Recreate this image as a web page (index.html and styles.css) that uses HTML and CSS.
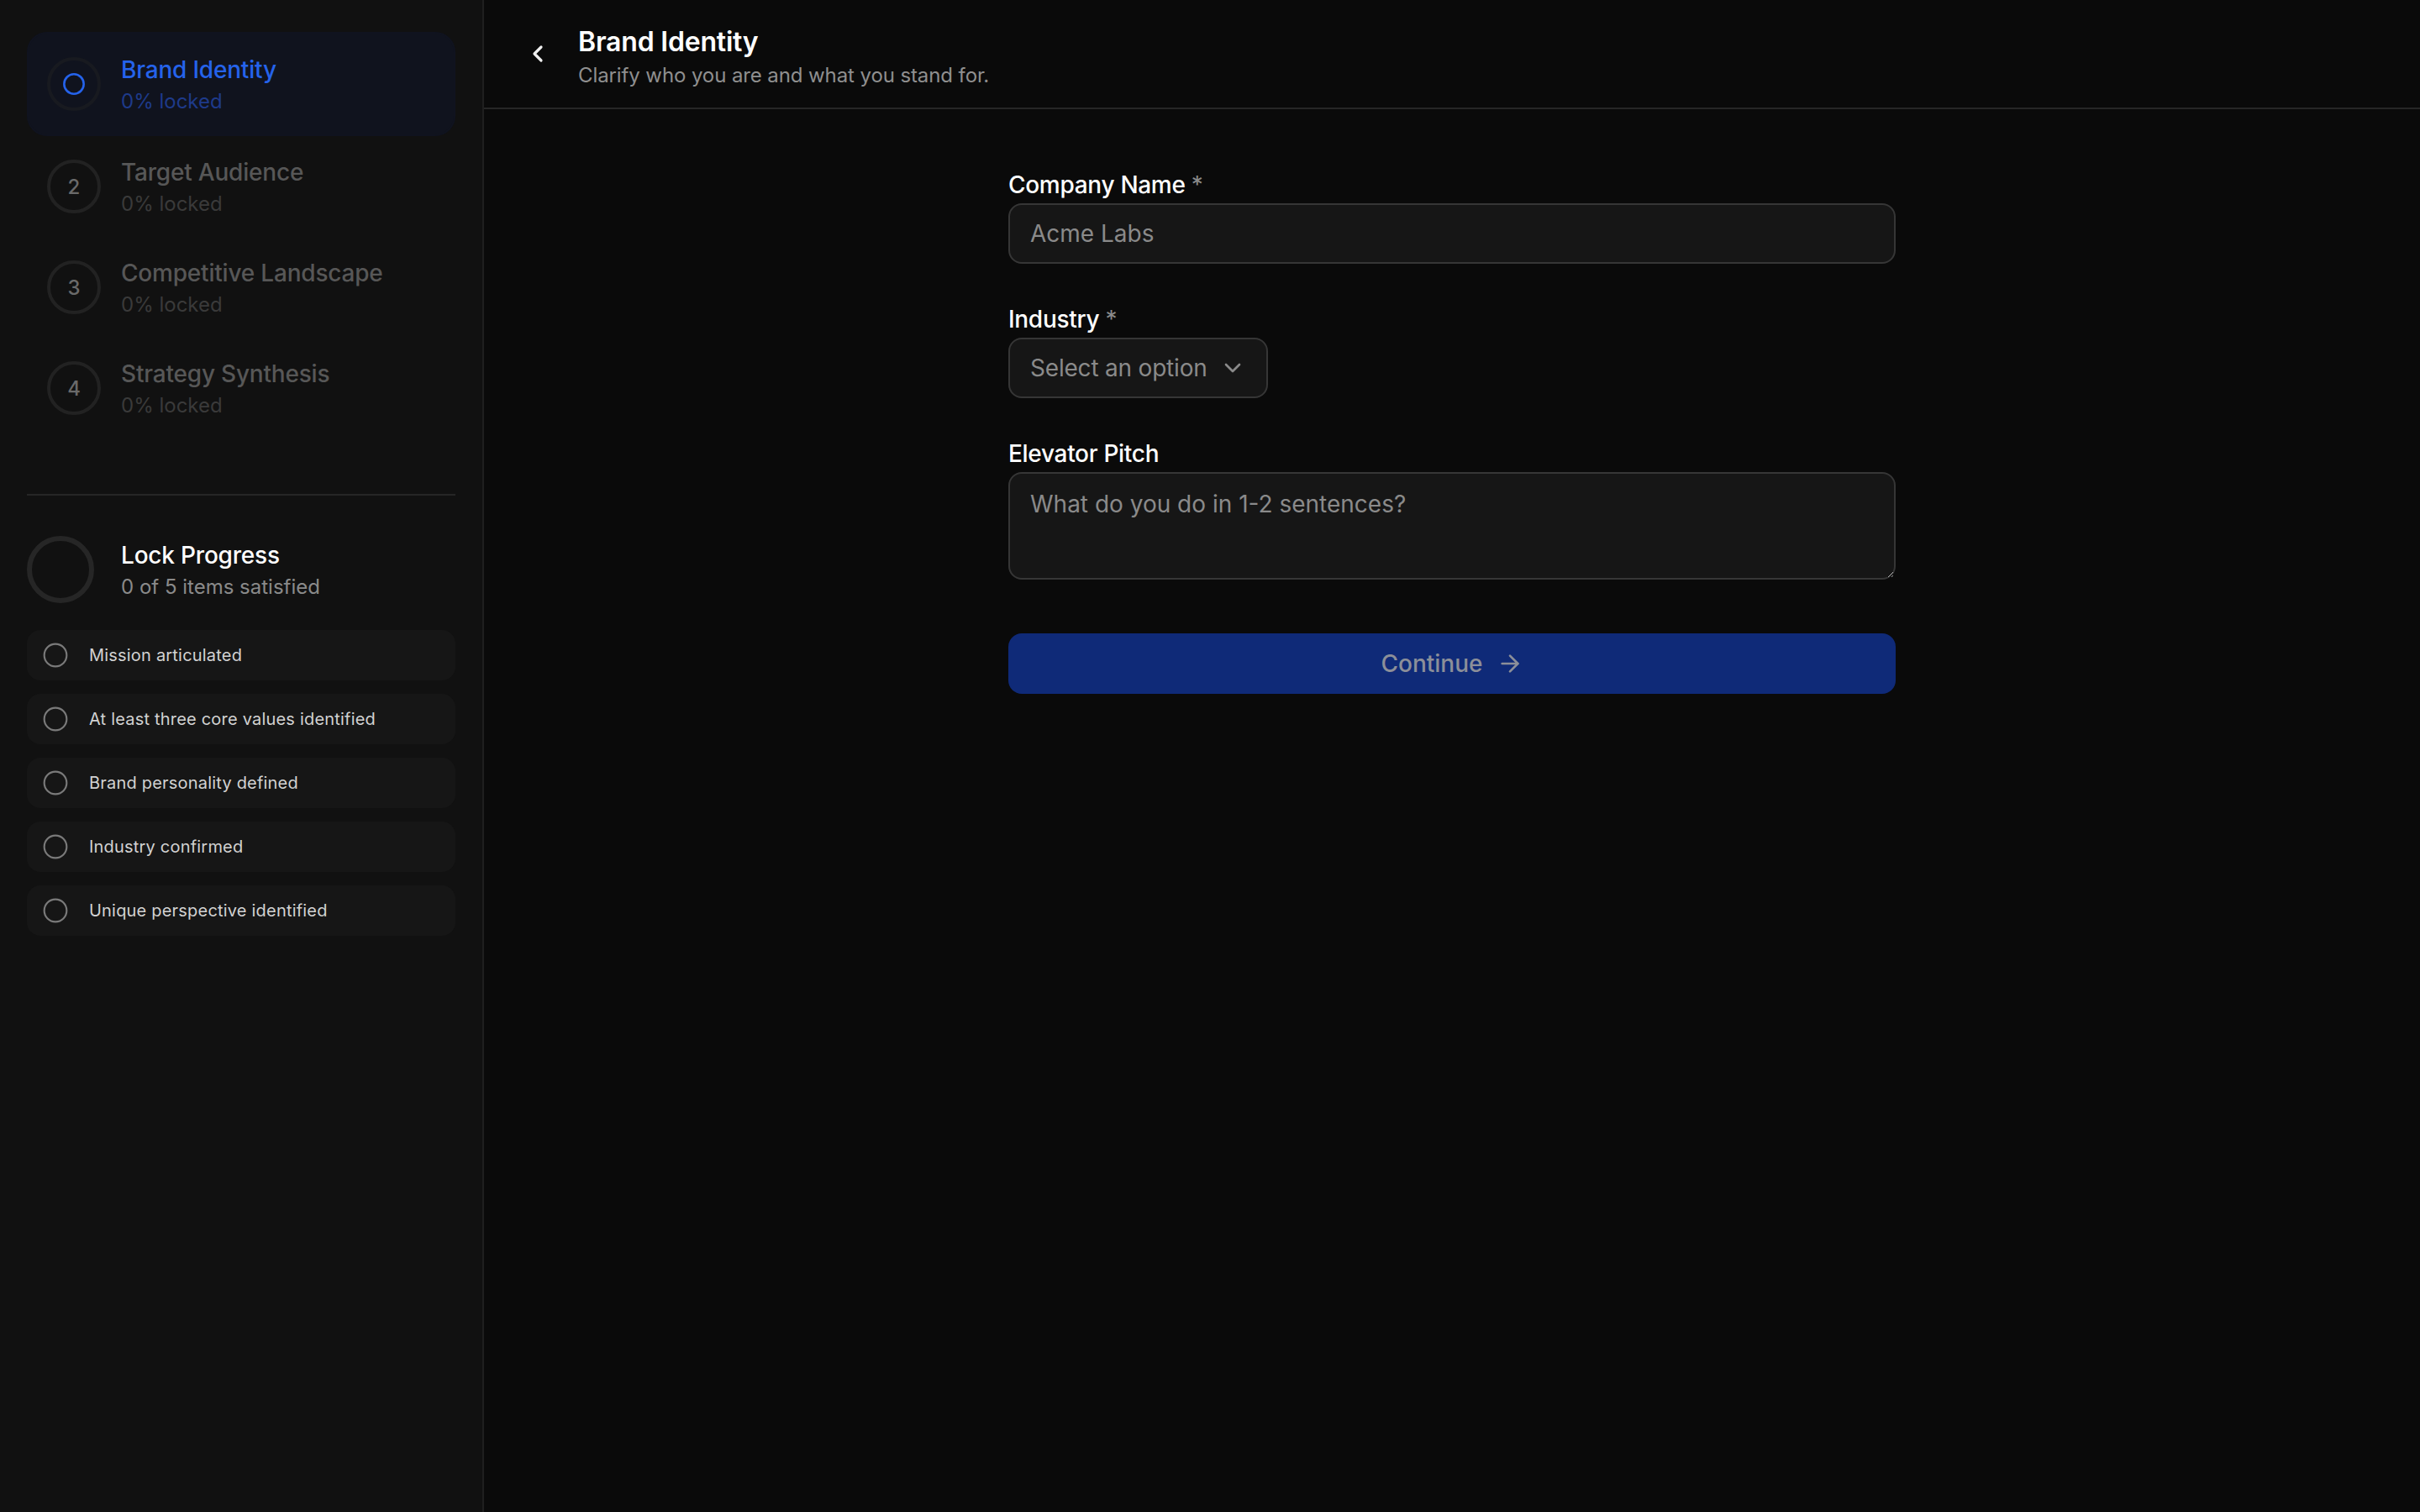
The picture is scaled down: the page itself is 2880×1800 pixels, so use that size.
FILE: index.html
```html
<!DOCTYPE html>
<html lang="en">
<head>
<meta charset="utf-8">
<title>Brand Identity</title>
<link rel="stylesheet" href="styles.css">
</head>
<body>
<div class="app">
  <aside class="sidebar">
    <nav class="steps">
      <div class="step step-active">
        <div class="step-badge">
          <svg width="14" height="14" viewBox="0 0 24 24" fill="none" stroke="currentColor" stroke-width="2.2"><circle cx="12" cy="12" r="10"/></svg>
        </div>
        <div class="step-text">
          <div class="step-title">Brand Identity</div>
          <div class="step-sub">0% locked</div>
        </div>
      </div>
      <div class="step">
        <div class="step-badge">2</div>
        <div class="step-text">
          <div class="step-title">Target Audience</div>
          <div class="step-sub">0% locked</div>
        </div>
      </div>
      <div class="step">
        <div class="step-badge">3</div>
        <div class="step-text">
          <div class="step-title">Competitive Landscape</div>
          <div class="step-sub">0% locked</div>
        </div>
      </div>
      <div class="step">
        <div class="step-badge">4</div>
        <div class="step-text">
          <div class="step-title">Strategy Synthesis</div>
          <div class="step-sub">0% locked</div>
        </div>
      </div>
    </nav>

    <div class="divider"></div>

    <section class="lock">
      <div class="lock-head">
        <svg class="lock-ring" width="40" height="40" viewBox="0 0 40 40"><circle cx="20" cy="20" r="18.5" fill="none" stroke="#262626" stroke-width="3"/></svg>
        <div>
          <div class="lock-title">Lock Progress</div>
          <div class="lock-sub">0 of 5 items satisfied</div>
        </div>
      </div>
      <ul class="checklist">
        <li class="check"><svg width="16" height="16" viewBox="0 0 24 24" fill="none" stroke="currentColor" stroke-width="1.6"><circle cx="12" cy="12" r="10"/></svg><span>Mission articulated</span></li>
        <li class="check"><svg width="16" height="16" viewBox="0 0 24 24" fill="none" stroke="currentColor" stroke-width="1.6"><circle cx="12" cy="12" r="10"/></svg><span>At least three core values identified</span></li>
        <li class="check"><svg width="16" height="16" viewBox="0 0 24 24" fill="none" stroke="currentColor" stroke-width="1.6"><circle cx="12" cy="12" r="10"/></svg><span>Brand personality defined</span></li>
        <li class="check"><svg width="16" height="16" viewBox="0 0 24 24" fill="none" stroke="currentColor" stroke-width="1.6"><circle cx="12" cy="12" r="10"/></svg><span>Industry confirmed</span></li>
        <li class="check"><svg width="16" height="16" viewBox="0 0 24 24" fill="none" stroke="currentColor" stroke-width="1.6"><circle cx="12" cy="12" r="10"/></svg><span>Unique perspective identified</span></li>
      </ul>
    </section>
  </aside>

  <main class="main">
    <header class="topbar">
      <button class="back" type="button" aria-label="Back">
        <svg width="16" height="16" viewBox="0 0 24 24" fill="none" stroke="currentColor" stroke-width="2.4" stroke-linecap="round" stroke-linejoin="round"><path d="m15 18-6-6 6-6"/></svg>
      </button>
      <div class="topbar-text">
        <h1 class="page-title">Brand Identity</h1>
        <p class="page-sub">Clarify who you are and what you stand for.</p>
      </div>
    </header>

    <div class="content">
      <form class="form">
        <div class="field">
          <label class="label">Company Name <span class="req">*</span></label>
          <input class="input" type="text" placeholder="Acme Labs">
        </div>
        <div class="field">
          <label class="label">Industry <span class="req">*</span></label>
          <div>
            <button class="select" type="button">
              <span>Select an option</span>
              <svg width="16" height="16" viewBox="0 0 24 24" fill="none" stroke="currentColor" stroke-width="2" stroke-linecap="round" stroke-linejoin="round"><path d="m6 9 6 6 6-6"/></svg>
            </button>
          </div>
        </div>
        <div class="field">
          <label class="label">Elevator Pitch</label>
          <textarea class="textarea" placeholder="What do you do in 1-2 sentences?"></textarea>
        </div>
        <button class="continue" type="button">
          <span>Continue</span>
          <svg width="16" height="16" viewBox="0 0 24 24" fill="none" stroke="currentColor" stroke-width="2" stroke-linecap="round" stroke-linejoin="round"><path d="M5 12h14"/><path d="m12 5 7 7-7 7"/></svg>
        </button>
      </form>
    </div>
  </main>
</div>
</body>
</html>
```

FILE: styles.css
```css
html {
  zoom: 2;
  background: #0a0a0a;
}

* {
  box-sizing: border-box;
}

body {
  margin: 0;
  background: #0a0a0a;
  color: #fafafa;
  font-family: "Inter", "Noto Sans", "Liberation Sans", sans-serif;
  -webkit-font-smoothing: antialiased;
}

.app {
  display: flex;
  min-height: 900px;
}

/* Sidebar */
.sidebar {
  width: 288px;
  flex-shrink: 0;
  background: #111111;
  border-right: 1px solid #1f1f1f;
  padding: 19px 16px 20px;
}

.steps {
  display: flex;
  flex-direction: column;
}

.step {
  display: flex;
  align-items: center;
  gap: 12px;
  padding: 11.5px 12px;
  border-radius: 12px;
}

.step-active {
  background: #10131e;
  border: 1px solid #10131f;
  padding: 11.5px 11px;
}

.step-badge {
  width: 32px;
  height: 32px;
  flex-shrink: 0;
  border-radius: 50%;
  border: 2px solid #222222;
  display: flex;
  align-items: center;
  justify-content: center;
  font-size: 12px;
  font-weight: 500;
  color: #6a6a6a;
}

.step-active .step-badge {
  border-color: #181a20;
  color: #2563eb;
}

.step-title {
  font-size: 14px;
  line-height: 20px;
  font-weight: 500;
  letter-spacing: -0.1px;
  color: #575757;
}

.step-sub {
  margin-top: 1px;
  font-size: 12px;
  line-height: 16px;
  color: #3a3a3a;
}

.step-active .step-title {
  color: #2563eb;
}

.step-active .step-sub {
  color: #1e3a8a;
}

.divider {
  height: 1px;
  background: #262626;
  margin: 33px 0 24px;
}

.lock-head {
  display: flex;
  align-items: center;
  gap: 16px;
}

.lock-ring {
  display: block;
  flex-shrink: 0;
}

.lock-title {
  font-size: 14px;
  line-height: 20px;
  font-weight: 500;
  letter-spacing: -0.1px;
  color: #ffffff;
}

.lock-sub {
  margin-top: 1px;
  font-size: 12px;
  line-height: 16px;
  color: #8a8a8a;
}

.checklist {
  list-style: none;
  margin: 16px 0 0;
  padding: 0;
  display: flex;
  flex-direction: column;
  gap: 8px;
}

.check {
  display: flex;
  align-items: center;
  gap: 12px;
  height: 30px;
  padding: 0 9px;
  border-radius: 8px;
  background: #161616;
  font-size: 10px;
  letter-spacing: 0.1px;
  color: #d2d2d2;
}

.check svg {
  color: #7a7a7a;
  flex-shrink: 0;
}

/* Main */
.main {
  flex: 1;
  min-width: 0;
  background: #0a0a0a;
}

.topbar {
  height: 65px;
  display: flex;
  align-items: center;
  gap: 16px;
  padding: 0 24px;
  border-bottom: 1px solid #262626;
}

.topbar-text {
  padding-top: 2px;
}

.back {
  width: 16px;
  height: 16px;
  padding: 0;
  border: 0;
  background: none;
  color: #f0f0f0;
  display: flex;
  align-items: center;
  justify-content: center;
}

.page-title {
  margin: 0;
  font-size: 16px;
  line-height: 24px;
  font-weight: 600;
  letter-spacing: -0.1px;
  color: #ffffff;
}

.page-sub {
  margin: 0;
  font-size: 12px;
  line-height: 16px;
  letter-spacing: -0.05px;
  color: #8f8f8f;
}

.content {
  padding: 36px 24px;
}

.form {
  max-width: 528px;
  margin: 0 auto;
  display: flex;
  flex-direction: column;
  gap: 24px;
}

.field {
  display: flex;
  flex-direction: column;
}

.label {
  font-size: 14px;
  line-height: 18px;
  font-weight: 500;
  letter-spacing: -0.15px;
  color: #ffffff;
  margin-bottom: 2px;
}

.req {
  color: #8a8a8a;
  font-weight: 400;
}

.input,
.textarea,
.select {
  font-family: inherit;
  font-size: 14px;
  color: #e5e5e5;
  background: #161616;
  border: 1px solid #363636;
  border-radius: 8px;
  outline: none;
}

.input {
  height: 36px;
  padding: 0 12px;
}

.textarea {
  height: 64px;
  padding: 8px 12px;
  line-height: 20px;
  resize: vertical;
  color-scheme: dark;
}

.input::placeholder,
.textarea::placeholder {
  color: #8a8a8a;
}

.select {
  height: 36px;
  display: inline-flex;
  align-items: center;
  gap: 7px;
  padding: 0 12px;
  letter-spacing: -0.1px;
  color: #8a8a8a;
}

.select svg {
  color: #8a8a8a;
}

.continue {
  margin-top: 8px;
  height: 36px;
  border: 0;
  border-radius: 8px;
  background: #0f2a78;
  color: #8c8f99;
  font-family: inherit;
  font-size: 14px;
  font-weight: 500;
  display: flex;
  align-items: center;
  justify-content: center;
  gap: 8px;
}
```
